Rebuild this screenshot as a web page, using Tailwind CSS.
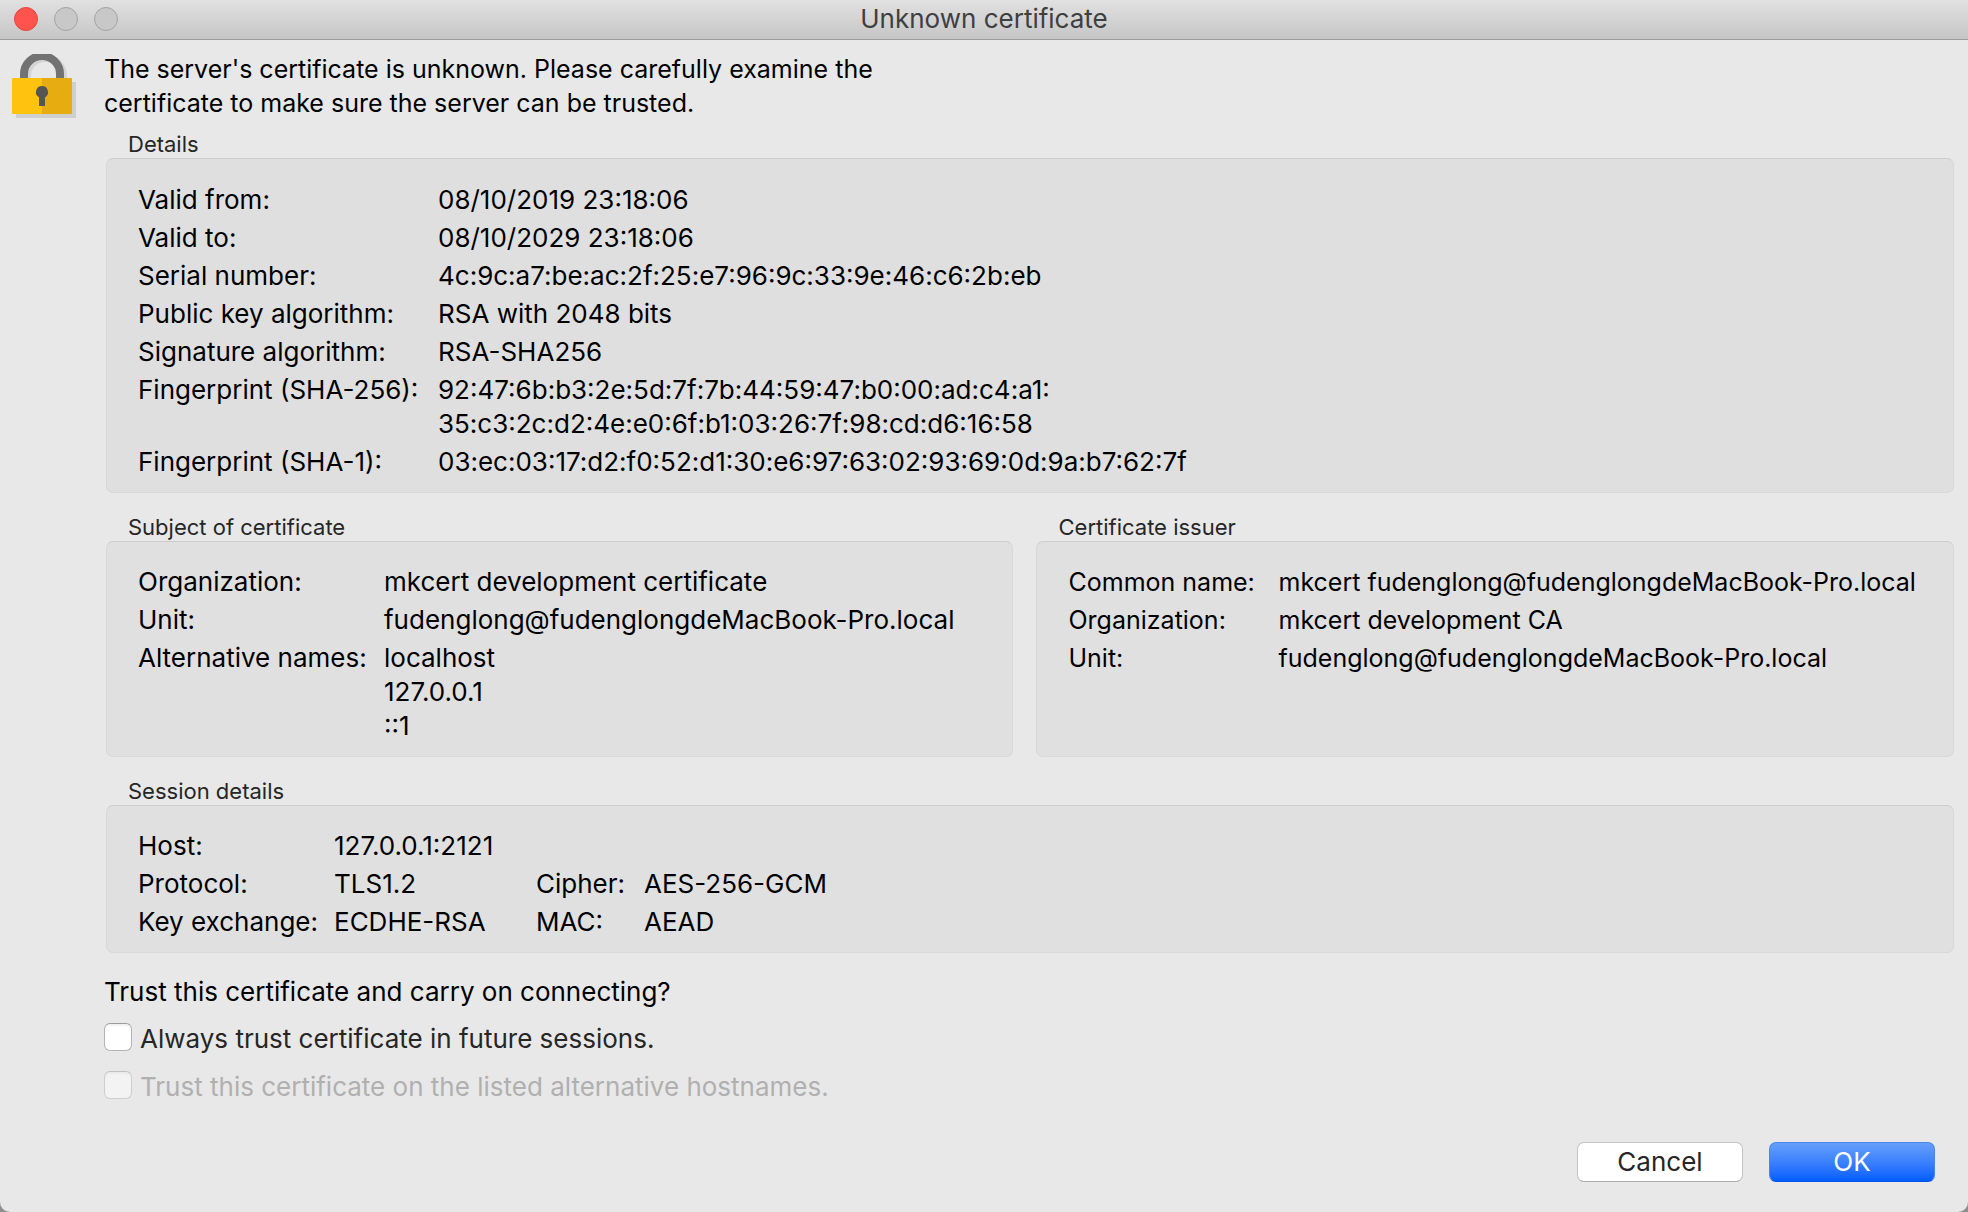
<!DOCTYPE html>
<html lang="en" class="bg-[#8f8f8f]">
<head>
<meta charset="utf-8">
<meta name="viewport" content="width=device-width, initial-scale=1">
<title>Unknown certificate</title>
<script src="https://cdn.jsdelivr.net/npm/@tailwindcss/browser@4"></script>
</head>
<body class="flex min-h-screen flex-col rounded-b-[10px] bg-[#e8e8e8] font-['Inter',sans-serif] text-[26px] leading-[34px] text-black">
<header class="grid h-10 shrink-0 grid-cols-[1fr_auto_1fr] items-center border-b border-[#9b9b9b] bg-linear-to-b from-[#e1e1e1] to-[#c6c6c6] px-3.5 pb-0.5">
  <div class="flex gap-4">
    <button aria-label="Close" class="size-6 rounded-full border border-[#e2463f] bg-[#fe544d]"></button>
    <button aria-label="Minimize" disabled class="size-6 rounded-full border border-[#a3a3a3] bg-[#c8c8c8]"></button>
    <button aria-label="Zoom" disabled class="size-6 rounded-full border border-[#a3a3a3] bg-[#c8c8c8]"></button>
  </div>
  <h1 class="text-[#3f3f3f]">Unknown certificate</h1>
</header>
<main class="flex grow pt-3 pr-3.5 pl-3">
  <svg class="mt-0.5 h-[66px] w-[66px] shrink-0" viewBox="0 0 66 66" aria-hidden="true">
    <path d="M4 28h60v36H4z" fill="#cfcfcf"/>
    <path d="M15 28V22a18 18 0 0 1 36 0v6" fill="none" stroke="#d4d4d4" stroke-width="8"/>
    <path d="M12 26V20a18 18 0 0 1 36 0v6" fill="none" stroke="#727272" stroke-width="8"/>
    <rect y="24" width="60" height="36" rx="1" fill="#ffc20e"/>
    <path d="M30 24h29a1 1 0 0 1 1 1v34a1 1 0 0 1-1 1H30z" fill="#e6ac10"/>
    <path d="M30 32a6 6 0 0 1 3 11.200V52h-6v-8.800A6 6 0 0 1 30 32z" fill="#555"/>
  </svg>
  <div class="ml-[26px] flex min-w-0 grow flex-col">
    <p class="text-[25px]">The server's certificate is unknown. Please carefully examine the<br>certificate to make sure the server can be trusted.</p>

    <section class="mt-2.5 ml-0.5">
      <h2 class="pl-[22px] text-[22px] leading-7 text-[#262626]">Details</h2>
      <dl class="grid grid-cols-[300px_1fr] gap-y-1 rounded-[7px] border border-[#d8d8d8] border-t-[#cdcdcd] bg-[#dfdfdf] pt-6 pb-[13px] pl-[31px]">
        <dt>Valid from:</dt><dd>08/10/2019 23:18:06</dd>
        <dt>Valid to:</dt><dd>08/10/2029 23:18:06</dd>
        <dt>Serial number:</dt><dd>4c:9c:a7:be:ac:2f:25:e7:96:9c:33:9e:46:c6:2b:eb</dd>
        <dt>Public key algorithm:</dt><dd>RSA with 2048 bits</dd>
        <dt>Signature algorithm:</dt><dd>RSA-SHA256</dd>
        <dt>Fingerprint (SHA-256):</dt><dd>92:47:6b:b3:2e:5d:7f:7b:44:59:47:b0:00:ad:c4:a1:<br>35:c3:2c:d2:4e:e0:6f:b1:03:26:7f:98:cd:d6:16:58</dd>
        <dt>Fingerprint (SHA-1):</dt><dd>03:ec:03:17:d2:f0:52:d1:30:e6:97:63:02:93:69:0d:9a:b7:62:7f</dd>
      </dl>
    </section>

    <div class="mt-5 ml-0.5 grid grid-cols-[907fr_917fr] gap-[23px]">
      <section class="flex min-w-0 flex-col">
        <h2 class="pl-[22px] text-[22px] leading-7 text-[#262626]">Subject of certificate</h2>
        <dl class="grid grow grid-cols-[246px_1fr] content-start gap-y-1 rounded-[7px] border border-[#d8d8d8] border-t-[#cdcdcd] bg-[#e0e0e0] pt-[23px] pb-[13px] pl-[31px]">
          <dt>Organization:</dt><dd>mkcert development certificate</dd>
          <dt>Unit:</dt><dd>fudenglong@fudenglongdeMacBook-Pro.local</dd>
          <dt>Alternative names:</dt><dd>localhost<br>127.0.0.1<br>::1</dd>
        </dl>
      </section>
      <section class="flex min-w-0 flex-col">
        <h2 class="pl-[22px] text-[22px] leading-7 text-[#262626]">Certificate issuer</h2>
        <dl class="grid grow grid-cols-[210px_1fr] content-start gap-y-1 rounded-[7px] border border-[#d8d8d8] border-t-[#cdcdcd] bg-[#e0e0e0] pt-[23px] pb-[13px] pl-[31px] text-[25px]">
          <dt>Common name:</dt><dd class="whitespace-nowrap">mkcert fudenglong@fudenglongdeMacBook-Pro.local</dd>
          <dt>Organization:</dt><dd>mkcert development CA</dd>
          <dt>Unit:</dt><dd>fudenglong@fudenglongdeMacBook-Pro.local</dd>
        </dl>
      </section>
    </div>

    <section class="mt-5 ml-0.5">
      <h2 class="pl-[22px] text-[22px] leading-7 text-[#262626]">Session details</h2>
      <dl class="grid grid-cols-[196px_202px_108px_1fr] gap-y-1 rounded-[7px] border border-[#d8d8d8] border-t-[#cdcdcd] bg-[#e0e0e0] pt-[23px] pb-[13px] pl-[31px]">
        <dt>Host:</dt><dd class="col-span-3">127.0.0.1:2121</dd>
        <dt>Protocol:</dt><dd>TLS1.2</dd><dt>Cipher:</dt><dd>AES-256-GCM</dd>
        <dt>Key exchange:</dt><dd>ECDHE-RSA</dd><dt>MAC:</dt><dd>AEAD</dd>
      </dl>
    </section>

    <p class="mt-[22px]">Trust this certificate and carry on connecting?</p>
    <div class="mt-[13px] flex items-center gap-2">
      <input id="always" type="checkbox" class="mb-1 size-7 appearance-none rounded-md border border-[#b4b4b4] border-t-[#9c9c9c] bg-white shadow-[inset_0_2px_2px_#0000000f]">
      <label for="always" class="text-[#262626]">Always trust certificate in future sessions.</label>
    </div>
    <div class="mt-3.5 flex items-center gap-2">
      <input id="alt" type="checkbox" disabled class="mb-1 size-7 appearance-none rounded-md border border-[#cecece] border-t-[#c0c0c0] bg-[#f3f3f3] shadow-[inset_0_2px_2px_#0000000a]">
      <label for="alt" class="text-[#b0b0b0]">Trust this certificate on the listed alternative hostnames.</label>
    </div>

    <div class="mt-auto mr-[19px] mb-[30px] flex justify-end gap-[26px] pt-6">
      <button class="h-10 w-[166px] rounded-[7px] border border-[#c4c4c4] border-b-[#adadad] bg-white text-[#262626]">Cancel</button>
      <button class="h-10 w-[166px] rounded-[7px] border border-[#4a86ee] border-b-[#0054e8] bg-linear-to-b from-[#669ffa] to-[#005cff] text-white">OK</button>
    </div>
  </div>
</main>
</body>
</html>
